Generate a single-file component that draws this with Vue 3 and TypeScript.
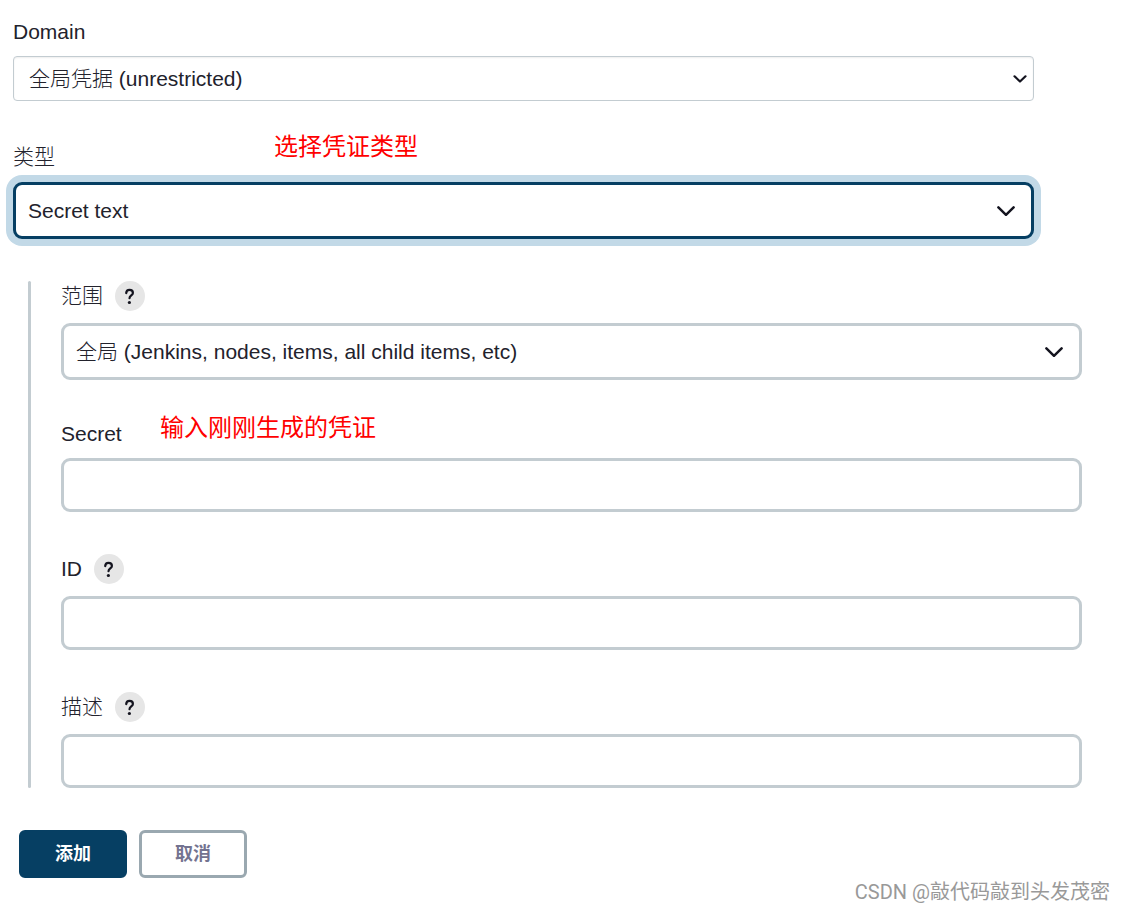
<script setup lang="ts">
import { reactive } from 'vue'

interface TextField {
  key: 'secret' | 'id' | 'description'
  label: string
  help: boolean
  type: string
  note?: string
}

const fields: TextField[] = [
  { key: 'secret', label: 'Secret', help: false, type: 'password', note: '输入刚刚生成的凭证' },
  { key: 'id', label: 'ID', help: true, type: 'text' },
  { key: 'description', label: '描述', help: true, type: 'text' },
]

const form = reactive({
  domain: 'global',
  kind: 'secret-text',
  scope: 'global',
  secret: '',
  id: '',
  description: '',
})
</script>

<template>
  <form class="page" @submit.prevent>
    <div class="field outer">
      <div class="label-row"><label for="domain">Domain</label></div>
      <div class="select-wrap">
        <select id="domain" v-model="form.domain" class="control compact">
          <option value="global">全局凭据 (unrestricted)</option>
        </select>
        <svg class="chevron small" viewBox="0 0 14 8" aria-hidden="true"><path d="M1.5 1.3 7 6.5l5.5-5.2" /></svg>
      </div>
    </div>

    <div class="field outer">
      <div class="label-row cjk"><label for="kind">类型</label></div>
      <span class="note kind-note">选择凭证类型</span>
      <div class="select-wrap">
        <select id="kind" v-model="form.kind" class="control active">
          <option value="secret-text">Secret text</option>
        </select>
        <svg class="chevron" viewBox="0 0 18 10" aria-hidden="true"><path d="M1.4 1.4 9 8.8l7.6-7.4" /></svg>
      </div>
    </div>

    <div class="group">
      <div class="field">
        <div class="label-row">
          <label for="scope">范围</label>
          <button type="button" class="help" aria-label="范围 ?">
            <svg viewBox="0 0 30 30"><path d="M11.2 12.1c.1-2 1.5-3.2 3.3-3.2 2 0 3.4 1.2 3.4 3 0 2.5-3.4 2.6-3.4 5.3" /><circle cx="14.4" cy="21.5" r="1.6" /></svg>
          </button>
        </div>
        <div class="select-wrap">
          <select id="scope" v-model="form.scope" class="control">
            <option value="global">全局 (Jenkins, nodes, items, all child items, etc)</option>
          </select>
          <svg class="chevron" viewBox="0 0 18 10" aria-hidden="true"><path d="M1.4 1.4 9 8.8l7.6-7.4" /></svg>
        </div>
      </div>

      <div v-for="f in fields" :key="f.key" class="field">
        <div class="label-row">
          <label :for="f.key">{{ f.label }}</label>
          <button v-if="f.help" type="button" class="help" :aria-label="f.label + ' ?'">
            <svg viewBox="0 0 30 30"><path d="M11.2 12.1c.1-2 1.5-3.2 3.3-3.2 2 0 3.4 1.2 3.4 3 0 2.5-3.4 2.6-3.4 5.3" /><circle cx="14.4" cy="21.5" r="1.6" /></svg>
          </button>
        </div>
        <span v-if="f.note" class="note secret-note">{{ f.note }}</span>
        <input :id="f.key" v-model="form[f.key]" :type="f.type" class="control text" autocomplete="off" />
      </div>
    </div>

    <div class="actions">
      <button type="submit" class="btn primary">添加</button>
      <button type="button" class="btn">取消</button>
    </div>

    <span class="watermark">CSDN @敲代码敲到头发茂密</span>
  </form>
</template>

<style>
body {
  margin: 0;
  background: #fff;
}
</style>

<style scoped>
.page {
  position: relative;
  box-sizing: border-box;
  min-height: 100vh;
  padding: 20px 43px 32px 13px;
  display: flex;
  flex-direction: column;
  gap: 42px;
  color: #22222c;
  font-family: "Liberation Sans", "Noto Sans CJK SC", sans-serif;
  font-size: 21px;
  font-weight: 300;
  line-height: 24px;
}
.field {
  position: relative;
  display: flex;
  flex-direction: column;
  gap: 12px;
}
.outer {
  margin-right: 48px;
}
.label-row {
  display: flex;
  align-items: center;
  gap: 12px;
}
.label-row.cjk {
  height: 27px;
}
.help {
  width: 30px;
  height: 30px;
  padding: 0;
  border: 0;
  border-radius: 50%;
  background: #e6e6e6;
}
.help svg {
  display: block;
  width: 30px;
  height: 30px;
  fill: #14141f;
}
.help path {
  fill: none;
  stroke: #14141f;
  stroke-width: 2.2;
  stroke-linecap: round;
}
.select-wrap {
  position: relative;
}
.control {
  display: block;
  box-sizing: border-box;
  width: 100%;
  height: 57px;
  margin: 0;
  padding: 0 48px 0 12px;
  border: 3px solid #c3ccd1;
  border-radius: 9px;
  outline: 0;
  background: #fff;
  color: inherit;
  font: inherit;
  appearance: none;
}
.control.text {
  height: 54px;
  padding: 0 12px;
}
.control.compact {
  height: 45px;
  padding-left: 15px;
  border-width: 1px;
  border-radius: 4px;
  box-shadow: inset 0 1px 2px #00000012;
}
.control.active {
  border-color: #063f63;
  box-shadow: 0 0 0 7px #c2d9e7;
}
.chevron {
  position: absolute;
  top: 50%;
  right: 19px;
  width: 18px;
  height: 10px;
  transform: translateY(-50%);
  fill: none;
  stroke: #14141f;
  stroke-width: 2.5;
  stroke-linecap: round;
  stroke-linejoin: round;
  pointer-events: none;
}
.chevron.small {
  right: 7px;
  width: 14px;
  height: 8px;
  stroke-width: 2.2;
}
.group {
  position: relative;
  display: flex;
  flex-direction: column;
  gap: 42px;
  margin-left: 15px;
  padding-left: 33px;
}
.group::before {
  content: "";
  position: absolute;
  inset: 0 auto 0 0;
  width: 3px;
  border-radius: 2px;
  background: #c3ccd1;
}
.note {
  position: absolute;
  color: #f00;
  font-size: 24px;
  font-weight: 400;
  white-space: nowrap;
}
.kind-note {
  top: -8px;
  left: 261px;
}
.secret-note {
  top: -6px;
  left: 99px;
}
.actions {
  display: flex;
  gap: 12px;
  margin-left: 6px;
}
.btn {
  box-sizing: border-box;
  min-width: 108px;
  height: 48px;
  padding: 0 24px;
  border: 3px solid #9aa8b0;
  border-radius: 6px;
  background: #fff;
  color: #737390;
  font: inherit;
  font-size: 18px;
  font-weight: 700;
}
.btn.primary {
  border-color: #063f63;
  background: #063f63;
  color: #fff;
}
.watermark {
  position: absolute;
  right: 15px;
  bottom: 6px;
  color: #999;
  font-family: Roboto, "Noto Sans CJK SC", sans-serif;
  font-size: 20px;
  font-weight: 400;
}
</style>
